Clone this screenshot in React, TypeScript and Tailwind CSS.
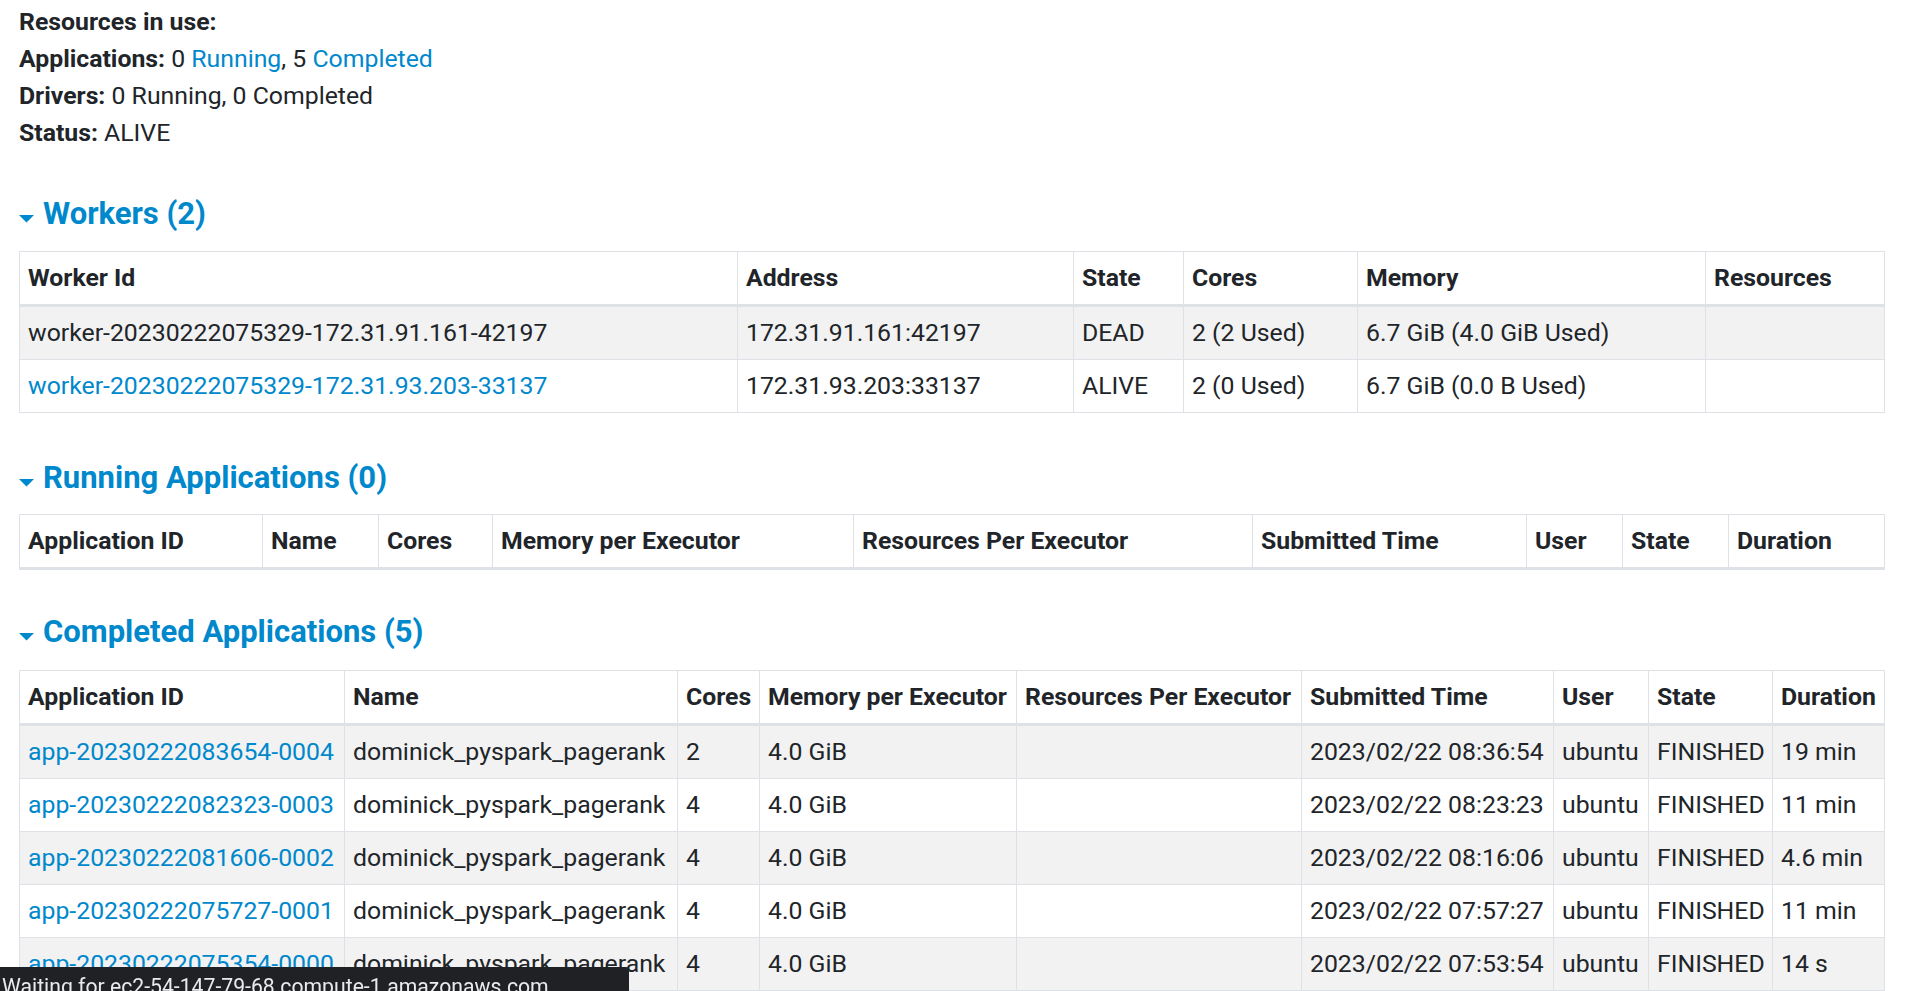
import React from "react";

const LINK = "text-[#0088cc]";

function Arrow() {
  return (
    <svg width="15" height="8" viewBox="0 0 15 8" className="mt-[20px] mr-[9px] shrink-0">
      <polygon points="0,0 15,0 7.5,7.5" fill="#0088cc" />
    </svg>
  );
}

function Heading({ text, className }: { text: string; className: string }) {
  return (
    <div className={"flex items-start h-[38px] " + className}>
      <Arrow />
      <span className={"text-[31px] leading-[38px] font-bold whitespace-nowrap " + LINK}>{text}</span>
    </div>
  );
}

const th =
  "border border-[#dee2e6] border-b-[3px] px-[8px] py-[8px] leading-[36px] text-left font-bold whitespace-nowrap";
const td =
  "border border-[#dee2e6] px-[8px] py-[8px] leading-[36px] text-left whitespace-nowrap";

const workers = [
  {
    id: "worker-20230222075329-172.31.91.161-42197",
    link: false,
    addr: "172.31.91.161:42197",
    state: "DEAD",
    cores: "2 (2 Used)",
    mem: "6.7 GiB (4.0 GiB Used)",
  },
  {
    id: "worker-20230222075329-172.31.93.203-33137",
    link: true,
    addr: "172.31.93.203:33137",
    state: "ALIVE",
    cores: "2 (0 Used)",
    mem: "6.7 GiB (0.0 B Used)",
  },
];

const apps = [
  { id: "app-20230222083654-0004", cores: "2", time: "2023/02/22 08:36:54", dur: "19 min" },
  { id: "app-20230222082323-0003", cores: "4", time: "2023/02/22 08:23:23", dur: "11 min" },
  { id: "app-20230222081606-0002", cores: "4", time: "2023/02/22 08:16:06", dur: "4.6 min" },
  { id: "app-20230222075727-0001", cores: "4", time: "2023/02/22 07:57:27", dur: "11 min" },
  { id: "app-20230222075354-0000", cores: "4", time: "2023/02/22 07:53:54", dur: "14 s" },
];

export default function App() {
  return (
    <div
      className="min-h-screen bg-white text-[#212529] text-[24.8px] pl-[19px] pr-[23px] pb-[40px]"
      style={{ fontFamily: "Roboto, 'Liberation Sans', sans-serif" }}
    >
      <ul className="pt-[3px] leading-[37px]">
        <li>
          <strong>Resources in use:</strong>
        </li>
        <li>
          <strong>Applications:</strong> 0 <span className={LINK}>Running</span>, 5{" "}
          <span className={LINK}>Completed</span>
        </li>
        <li>
          <strong>Drivers:</strong> 0 Running, 0 Completed
        </li>
        <li>
          <strong>Status:</strong> ALIVE
        </li>
      </ul>

      <Heading text="Workers (2)" className="mt-[44px] mb-[18px]" />
      <table className="w-full table-fixed border-collapse">
        <colgroup>
          <col className="w-[718px]" />
          <col className="w-[336px]" />
          <col className="w-[110px]" />
          <col className="w-[174px]" />
          <col className="w-[348px]" />
          <col className="w-[179px]" />
        </colgroup>
        <thead>
          <tr>
            <th className={th}>Worker Id</th>
            <th className={th}>Address</th>
            <th className={th}>State</th>
            <th className={th}>Cores</th>
            <th className={th}>Memory</th>
            <th className={th}>Resources</th>
          </tr>
        </thead>
        <tbody>
          {workers.map((w, i) => (
            <tr key={w.id} className={i % 2 === 0 ? "bg-[#f2f2f2]" : "bg-white"}>
              <td className={td}>{w.link ? <span className={LINK}>{w.id}</span> : w.id}</td>
              <td className={td}>{w.addr}</td>
              <td className={td}>{w.state}</td>
              <td className={td}>{w.cores}</td>
              <td className={td}>{w.mem}</td>
              <td className={td}></td>
            </tr>
          ))}
        </tbody>
      </table>

      <Heading text="Running Applications (0)" className="mt-[46px] mb-[17px]" />
      <table className="w-full table-fixed border-collapse">
        <colgroup>
          <col className="w-[243px]" />
          <col className="w-[116px]" />
          <col className="w-[114px]" />
          <col className="w-[361px]" />
          <col className="w-[399px]" />
          <col className="w-[274px]" />
          <col className="w-[96px]" />
          <col className="w-[106px]" />
          <col className="w-[156px]" />
        </colgroup>
        <thead>
          <tr>
            <th className={th}>Application ID</th>
            <th className={th}>Name</th>
            <th className={th}>Cores</th>
            <th className={th}>Memory per Executor</th>
            <th className={th}>Resources Per Executor</th>
            <th className={th}>Submitted Time</th>
            <th className={th}>User</th>
            <th className={th}>State</th>
            <th className={th}>Duration</th>
          </tr>
        </thead>
      </table>

      <Heading text="Completed Applications (5)" className="mt-[43px] mb-[19px]" />
      <table className="w-full table-fixed border-collapse">
        <colgroup>
          <col className="w-[325px]" />
          <col className="w-[333px]" />
          <col className="w-[82px]" />
          <col className="w-[257px]" />
          <col className="w-[285px]" />
          <col className="w-[252px]" />
          <col className="w-[95px]" />
          <col className="w-[124px]" />
          <col className="w-[112px]" />
        </colgroup>
        <thead>
          <tr>
            <th className={th}>Application ID</th>
            <th className={th}>Name</th>
            <th className={th}>Cores</th>
            <th className={th}>Memory per Executor</th>
            <th className={th}>Resources Per Executor</th>
            <th className={th}>Submitted Time</th>
            <th className={th}>User</th>
            <th className={th}>State</th>
            <th className={th}>Duration</th>
          </tr>
        </thead>
        <tbody>
          {apps.map((a, i) => (
            <tr key={a.id} className={i % 2 === 0 ? "bg-[#f2f2f2]" : "bg-white"}>
              <td className={td}>
                <span className={LINK}>{a.id}</span>
              </td>
              <td className={td}>dominick_pyspark_pagerank</td>
              <td className={td}>{a.cores}</td>
              <td className={td}>4.0 GiB</td>
              <td className={td}></td>
              <td className={td}>{a.time}</td>
              <td className={td}>ubuntu</td>
              <td className={td}>FINISHED</td>
              <td className={td}>{a.dur}</td>
            </tr>
          ))}
        </tbody>
      </table>

      <div className="fixed left-0 bottom-0 w-[629px] h-[24px] bg-[#202124] overflow-hidden rounded-tr-[3px]">
        <div className="pl-[2px] pt-[8px] text-[21.2px] leading-[24px] text-[#e8eaed] whitespace-nowrap">
          Waiting for ec2-54-147-79-68.compute-1.amazonaws.com...
        </div>
      </div>
    </div>
  );
}
